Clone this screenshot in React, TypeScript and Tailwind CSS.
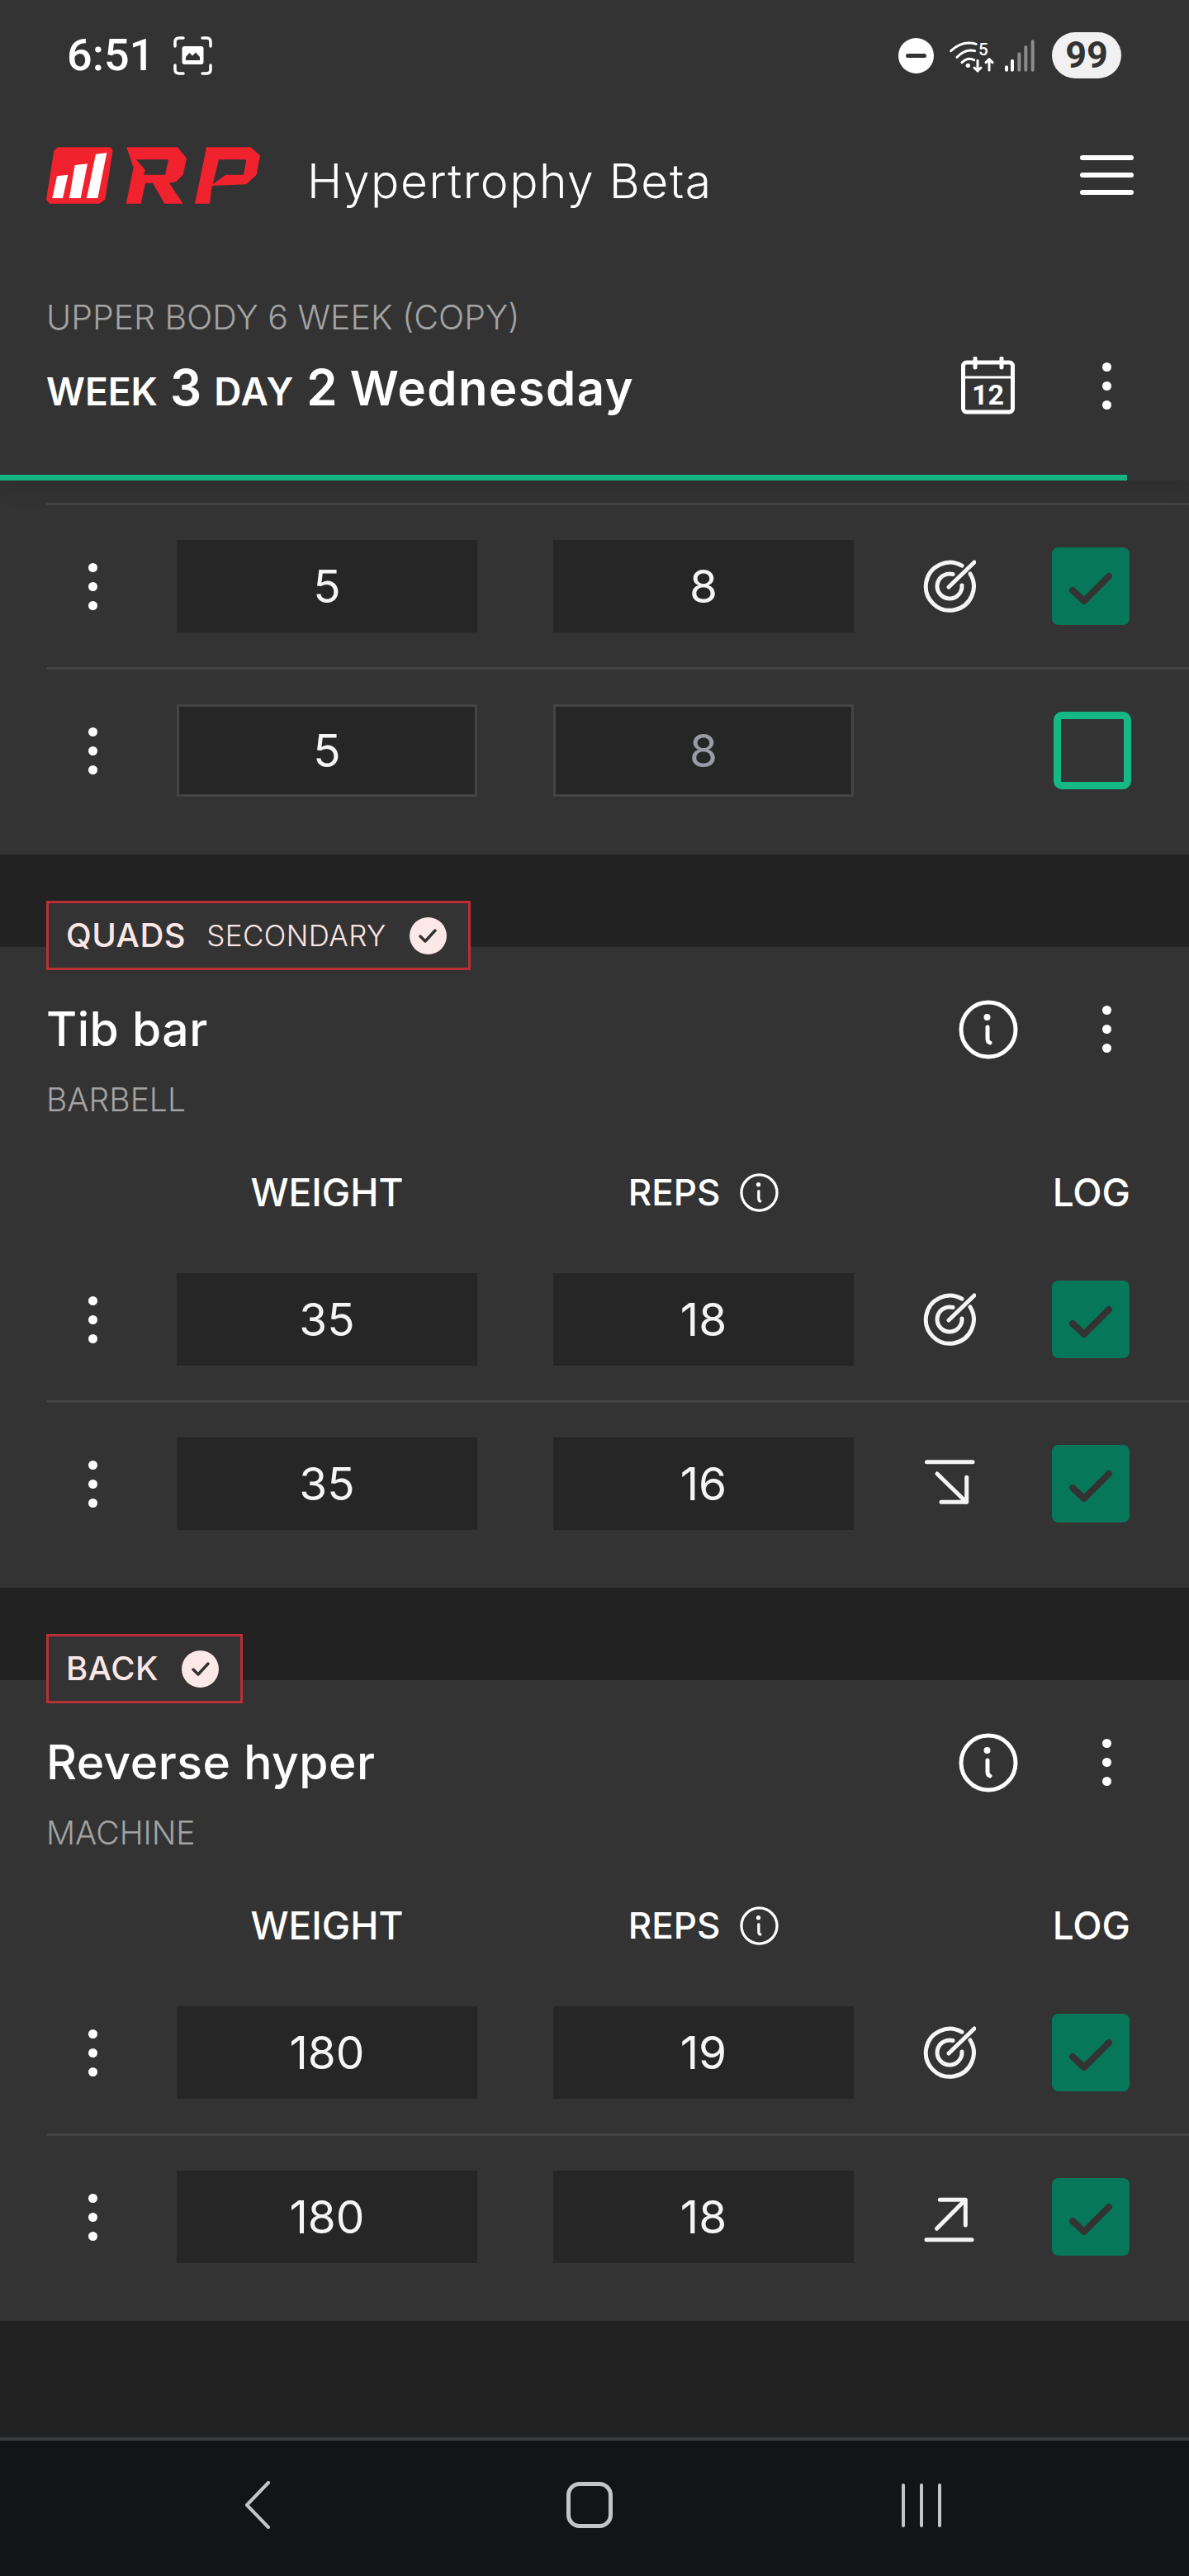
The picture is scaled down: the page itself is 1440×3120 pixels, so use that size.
import React from 'react';

const Dots = () => (
  <div className="flex flex-col items-center gap-[12px]">
    <span className="h-[11px] w-[11px] rounded-full bg-white" />
    <span className="h-[11px] w-[11px] rounded-full bg-white" />
    <span className="h-[11px] w-[11px] rounded-full bg-white" />
  </div>
);

const TargetIcon = () => (
  <svg width="64" height="64" viewBox="0 0 64 64" fill="none" stroke="#f5f5f5" strokeWidth="5" strokeLinecap="round">
    <path d="M57 17A29 29 0 1 1 47 7.2" />
    <path d="M47 31A15 15 0 1 1 36 17.5" />
    <path d="M31 33L62 3" />
  </svg>
);

const ArrowDownIcon = () => (
  <svg width="64" height="64" viewBox="0 0 64 64" fill="none" stroke="#f5f5f5" strokeWidth="5" strokeLinecap="round" strokeLinejoin="round">
    <path d="M4.5 5.7H60" />
    <path d="M17 20L52 54" />
    <path d="M52.7 24.3V54.3H22" />
  </svg>
);

const ArrowUpIcon = () => (
  <svg width="64" height="64" viewBox="0 0 64 64" fill="none" stroke="#f5f5f5" strokeWidth="5" strokeLinecap="round" strokeLinejoin="round">
    <path d="M4 59.7H59" />
    <path d="M16.5 46.3L50.5 12" />
    <path d="M20.3 11.3H51.3V42" />
  </svg>
);

const InfoIcon = ({ size }: { size: number }) => (
  <svg width={size} height={size} viewBox="0 0 72 72" fill="none" stroke="#ffffff" strokeLinecap="round">
    <circle cx="36" cy="36" r="33" strokeWidth="5" />
    <circle cx="34.5" cy="21" r="4" fill="#ffffff" stroke="none" />
    <path d="M35 33V47Q35 51 38 52" strokeWidth="5" />
  </svg>
);

const Check = ({ size = 94 }: { size?: number }) => (
  <svg width={size} height={size} viewBox="0 0 94 94" fill="none" stroke="#333333" strokeWidth="8" strokeLinecap="round" strokeLinejoin="round">
    <path d="M25 52L39 65L69 35" />
  </svg>
);

const SetRow = ({
  weight,
  reps,
  icon,
  done = true,
  line = true,
}: {
  weight: string;
  reps: string;
  icon?: React.ReactNode;
  done?: boolean;
  line?: boolean;
}) => (
  <div className={`ml-[56px] flex h-[199px] items-center border-t-[3px] pr-[72px] ${line ? 'border-[#434343]' : 'border-transparent'}`}>
    <div className="flex w-[112px] justify-center">
      <Dots />
    </div>
    {done ? (
      <>
        <div className="ml-[46px] flex h-[112px] w-[364px] items-center justify-center bg-[#262626] text-[55px] font-normal text-[#f5f5f5]">{weight}</div>
        <div className="ml-[92px] flex h-[112px] w-[364px] items-center justify-center bg-[#262626] text-[55px] font-normal text-[#f5f5f5]">{reps}</div>
      </>
    ) : (
      <>
        <div className="ml-[46px] flex h-[112px] w-[364px] items-center justify-center border-[3px] border-[#444444] bg-[#262626] text-[55px] font-normal text-[#f5f5f5]">{weight}</div>
        <div className="ml-[92px] flex h-[112px] w-[364px] items-center justify-center border-[3px] border-[#444444] bg-[#262626] text-[55px] font-normal text-[#9a9ca6]">{reps}</div>
      </>
    )}
    <div className="mr-[8px] flex w-[232px] justify-center">{icon}</div>
    {done ? (
      <div className="h-[94px] w-[94px] rounded-[8px] bg-[#07775a]">
        <Check />
      </div>
    ) : (
      <div className="-mr-[2px] ml-[2px] h-[94px] w-[94px] rounded-[10px] border-[9px] border-[#14b882]" />
    )}
  </div>
);

const MuscleBadge = ({ name, kind }: { name: string; kind?: string }) => (
  <div className="absolute left-[56px] top-[-56px] flex h-[84px] items-center border-[3px] border-[#b92f33] bg-[#333333] pl-[21px] pr-[26px] text-[#fbe6e6]">
    <span className="text-[40px] font-medium tracking-[0.5px]">{name}</span>
    {kind && <span className="ml-[25px] text-[35px] font-light tracking-[0.4px]">{kind}</span>}
    <span className="ml-[28px] flex h-[45px] w-[45px] items-center justify-center rounded-full bg-[#fde8e8]">
      <svg width="26" height="26" viewBox="0 0 26 26" fill="none" stroke="#333333" strokeWidth="3.5" strokeLinecap="round" strokeLinejoin="round">
        <path d="M4 14L10 20L22 7" />
      </svg>
    </span>
  </div>
);

const Exercise = ({
  muscle,
  kind,
  title,
  gear,
  rows,
}: {
  muscle: string;
  kind?: string;
  title: string;
  gear: string;
  rows: { weight: string; reps: string; icon: React.ReactNode }[];
}) => (
  <section className="relative bg-[#333333] pb-[28px]">
    <MuscleBadge name={muscle} kind={kind} />
    <div className="mt-[64px] flex h-[71px] items-center pl-[56px] pr-[94px]">
      <h2 className="text-[57px] font-medium tracking-[0.5px] text-white">{title}</h2>
      <div className="ml-auto">
        <InfoIcon size={72} />
      </div>
      <div className="ml-[102px]">
        <Dots />
      </div>
    </div>
    <p className="mt-[25px] h-[50px] pl-[56px] text-[39px] font-light leading-[50px] text-[#a3a3a3]">{gear}</p>
    <div className="ml-[56px] mt-[57px] flex h-[60px] items-center pr-[71px] font-medium text-white">
      <div className="ml-[158px] w-[364px] text-center text-[46px]">WEIGHT</div>
      <div className="ml-[92px] flex w-[364px] items-center justify-center gap-[24px] text-[44px]">
        REPS
        <InfoIcon size={47} />
      </div>
      <div className="ml-auto text-[46px]">LOG</div>
    </div>
    <div className="mt-[23px]">
      <SetRow {...rows[0]} line={false} />
      <SetRow {...rows[1]} />
    </div>
  </section>
);

const StatusBar = () => (
  <div className="flex h-[134px] items-center pl-[81px] pr-[82px]">
    <span className="font-[Roboto,sans-serif] text-[54px] font-medium leading-none text-white">6:51</span>
    <svg className="ml-[23px]" width="47" height="47" viewBox="0 0 47 47" fill="none" stroke="#ffffff" strokeWidth="3.5" strokeLinecap="round">
      <path d="M2 12V7Q2 2 7 2H12" />
      <path d="M35 2H40Q45 2 45 7V12" />
      <path d="M2 35V40Q2 45 7 45H12" />
      <path d="M35 45H40Q45 45 45 40V35" />
      <rect x="10.5" y="12" width="26" height="22" rx="3" fill="#ffffff" stroke="none" />
      <path d="M15 29V25L19.5 20L23 23.5L27 19.5L32 25V29Z" fill="#333333" stroke="none" />
    </svg>
    <span className="ml-auto flex h-[43px] w-[43px] items-center justify-center rounded-full bg-white">
      <span className="h-[5px] w-[25px] rounded-full bg-[#333333]" />
    </span>
    <svg className="ml-[18px]" width="58" height="50" viewBox="0 0 174 150" fill="none" stroke="#ffffff" strokeWidth="9" strokeLinecap="round" strokeLinejoin="round">
      <path d="M8 59Q50 20 100 34" />
      <path d="M30 82Q60 50 95 59" />
      <path d="M48 101Q70 80 92 92" />
      <circle cx="70" cy="112" r="8" fill="#ffffff" stroke="none" />
      <text x="108" y="74" fontFamily="Roboto, sans-serif" fontSize="62" fontWeight="500" fill="#ffffff" stroke="none">5</text>
      <path d="M105 94V132M93 120L105 132L117 120" />
      <path d="M147 129V89M135 101L147 89L159 101" />
    </svg>
    <svg className="ml-[8px]" width="40" height="50" viewBox="0 0 120 150" strokeWidth="12" strokeLinecap="round" fill="none">
      <path d="M12 118V128M33 95V128" stroke="#ffffff" />
      <path d="M58 70V128M82 45V128M107 25V128" stroke="#8b8b8b" />
    </svg>
    <span className="ml-[19px] flex h-[56px] w-[84px] items-center justify-center rounded-full bg-[#f1f1f1] font-[Roboto,sans-serif] text-[45px] font-bold text-[#333333]">99</span>
  </div>
);

const Logo = () => (
  <svg width="270" height="85" viewBox="0 0 810 255" fill="#f0222e">
    <path d="M60 25H250L260 35L232 215L210 230H30L18 215L46 38Z" />
    <path d="M40 210H78L97 125L57 130ZM102 210H143L168 85L122 90ZM165 210H205L238 45L198 50Z" fill="#ffffff" />
    <path
      fillRule="evenodd"
      d="M310 25H495L528 65L515 125L490 150L465 155L515 230H448L405 155H378L362 230H308L335 100ZM345 70H462L450 125H372L378 108Z"
    />
    <path
      fillRule="evenodd"
      d="M600 25H760L795 55L782 125L745 160L620 165L612 230H558L595 50ZM645 70H745L735 125H670L623 160Z"
    />
  </svg>
);

const AppBar = () => (
  <div className="flex h-[156px] items-center pl-[50px] pr-[67px]">
    <Logo />
    <h1 className="ml-[52px] pt-[14px] text-[57px] font-light leading-none tracking-[1.5px] text-white">Hypertrophy Beta</h1>
    <div className="ml-auto flex w-[65px] flex-col gap-[15px]">
      <span className="h-[6px] rounded-full bg-white" />
      <span className="h-[6px] rounded-full bg-white" />
      <span className="h-[6px] rounded-full bg-white" />
    </div>
  </div>
);

const WorkoutHead = () => (
  <div className="flex h-[285px] pl-[56px] pr-[94px] pt-[66px]">
    <div>
      <div className="h-[56px] text-[41px] font-light leading-[56px] text-[#a3a3a3]">UPPER BODY 6 WEEK (COPY)</div>
      <div className="mt-[17px] flex items-baseline gap-[15px] font-semibold leading-[80px] text-white">
        <span className="text-[46px]">WEEK</span>
        <span className="text-[60px]">3</span>
        <span className="text-[46px] tracking-[1px]">DAY</span>
        <span className="text-[60px]">2</span>
        <span className="text-[58px] tracking-[1.5px]">Wednesday</span>
      </div>
    </div>
    <div className="ml-auto mt-[76px] flex h-[70px] items-center self-start">
      <svg width="65" height="70" viewBox="0 0 65 70" fill="none" stroke="#ffffff" strokeWidth="5" strokeLinecap="round">
        <rect x="2.5" y="7" width="60" height="60" rx="4" />
        <path d="M2.5 25H62.5" strokeWidth="3" />
        <path d="M17 2V13M49 2V13" />
        <text x="32.5" y="58" textAnchor="middle" fontFamily="Roboto, sans-serif" fontSize="34" fontWeight="700" fill="#ffffff" stroke="none">12</text>
      </svg>
      <div className="ml-[106px]">
        <Dots />
      </div>
    </div>
  </div>
);

const NavBar = () => (
  <div className="flex h-[168px] items-center border-t-[4px] border-[#383c3f] bg-[#121417] pb-[8px] pl-[296px]">
    <svg width="32" height="58" viewBox="0 0 32 58" fill="none" stroke="#c4c5c9" strokeWidth="4" strokeLinecap="round" strokeLinejoin="round">
      <path d="M29 2L3 29L29 56" />
    </svg>
    <div className="ml-[358px] h-[56px] w-[56px] rounded-[16px] border-[5px] border-[#c4c5c9]" />
    <div className="ml-[350px] flex gap-[18px]">
      <span className="h-[53px] w-[4px] rounded-full bg-[#c4c5c9]" />
      <span className="h-[53px] w-[4px] rounded-full bg-[#c4c5c9]" />
      <span className="h-[53px] w-[4px] rounded-full bg-[#c4c5c9]" />
    </div>
  </div>
);

export default function App() {
  return (
    <div className="flex h-[3120px] w-[1440px] flex-col overflow-hidden bg-[#222222] font-[Inter,sans-serif]">
      <header className="relative z-10 bg-[#333333] shadow-[0_10px_24px_rgba(0,0,0,0.12)]">
        <StatusBar />
        <AppBar />
        <WorkoutHead />
        <div className="h-[7px] w-[1365px] bg-[#16b383]" />
      </header>

      <section className="bg-[#333333] pb-[28px] pt-[27px]">
        <SetRow weight="5" reps="8" icon={<TargetIcon />} />
        <SetRow weight="5" reps="8" done={false} />
      </section>

      <div className="h-[112px] shrink-0" />
      <Exercise
        muscle="QUADS"
        kind="SECONDARY"
        title="Tib bar"
        gear="BARBELL"
        rows={[
          { weight: '35', reps: '18', icon: <TargetIcon /> },
          { weight: '35', reps: '16', icon: <ArrowDownIcon /> },
        ]}
      />

      <div className="h-[112px] shrink-0" />
      <Exercise
        muscle="BACK"
        title="Reverse hyper"
        gear="MACHINE"
        rows={[
          { weight: '180', reps: '19', icon: <TargetIcon /> },
          { weight: '180', reps: '18', icon: <ArrowUpIcon /> },
        ]}
      />

      <div className="flex-1" />
      <NavBar />
    </div>
  );
}
